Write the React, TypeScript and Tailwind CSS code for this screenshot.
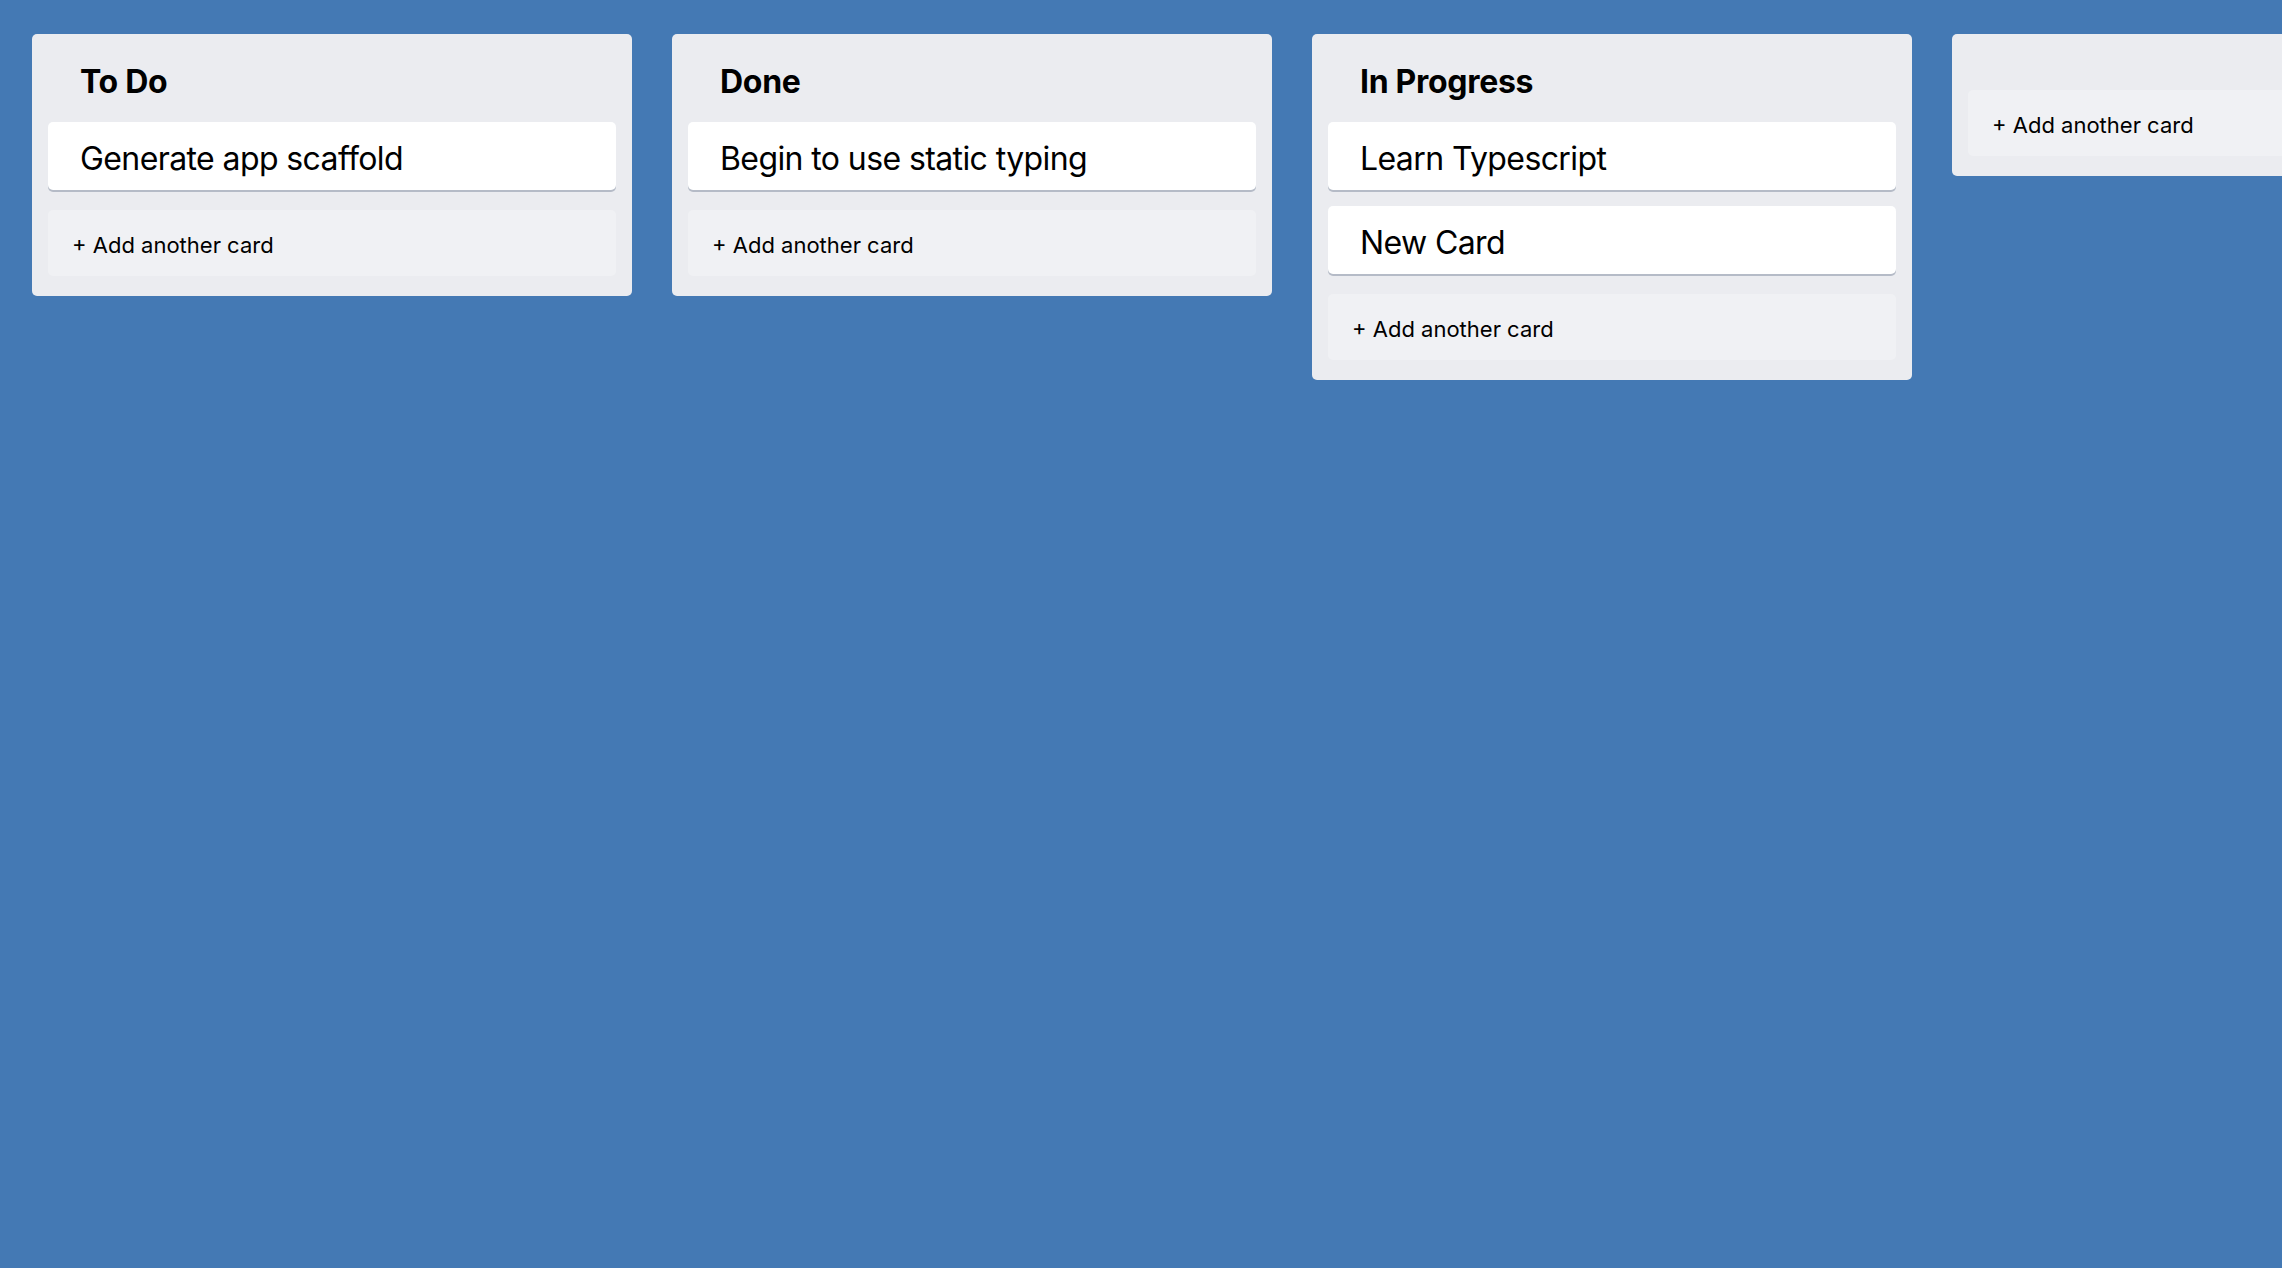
import React from "react";

type Column = { title: string; cards: string[] };

const columns: Column[] = [
  { title: "To Do", cards: ["Generate app scaffold"] },
  { title: "Done", cards: ["Begin to use static typing"] },
  { title: "In Progress", cards: ["Learn Typescript", "New Card"] },
  { title: "", cards: [] },
];

function ColumnView({ column }: { column: Column }) {
  return (
    <div className="w-[600px] shrink-0 self-start rounded-[5px] bg-[#ebecf0] px-4 pt-4 pb-5">
      <div className="px-8 pt-[16px] pb-[24px] text-[32px] leading-[32px] font-bold tracking-[-0.3px] text-black">
        {column.title}
      </div>
      <div className="flex flex-col gap-4">
        {column.cards.map((c) => (
          <div
            key={c}
            className="flex h-[68px] items-center rounded-[5px] bg-white px-8 pt-[5px] text-[32px] leading-[40px] tracking-[-0.6px] text-black shadow-[0_2px_0_#b5bbc7]"
          >
            {c}
          </div>
        ))}
      </div>
      <div
        className={
          "flex h-[66px] items-center rounded-[5px] bg-[#f0f1f4] pl-6 pt-[3px] text-[22px] leading-[28px] text-black " +
          (column.cards.length ? "mt-5" : "")
        }
      >
        + Add another card
      </div>
    </div>
  );
}

export default function App() {
  return (
    <div
      className="flex h-screen w-screen items-start gap-10 overflow-hidden bg-[#4479b4] pl-8 pt-[34px]"
      style={{ fontFamily: "Inter, 'Noto Sans', sans-serif" }}
    >
      {columns.map((col, i) => (
        <ColumnView key={i} column={col} />
      ))}
    </div>
  );
}
